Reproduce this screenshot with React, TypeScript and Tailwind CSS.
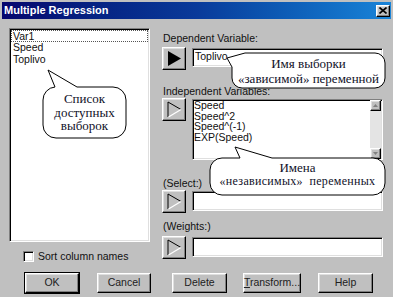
const sunken =
  "bg-white border border-t-[#808080] border-l-[#808080] border-r-white border-b-white shadow-[inset_1px_1px_0_#000,inset_-1px_-1px_0_#dfdfdf]";
const raised =
  "bg-[#c0c0c0] border border-t-white border-l-white border-r-black border-b-black shadow-[inset_-1px_-1px_0_#808080,inset_1px_1px_0_#dfdfdf]";

function ArrowButton({ filled }: { filled?: boolean }) {
  return (
    <div className={`${raised} w-[24px] h-[23px] shrink-0 flex items-center justify-center`}>
      <svg width="20" height="19" viewBox="0 0 20 19">
        {filled ? (
          <polygon points="4,2 17,9.5 4,17" fill="#000" />
        ) : (
          <>
            <polygon points="4,2 17,9.5 4,17" fill="#c0c0c0" />
            <polyline points="4,17 4,2 17,9.5" fill="none" stroke="#000" strokeWidth="1" />
            <line x1="17" y1="9.5" x2="4.5" y2="17" stroke="#fff" strokeWidth="1.2" />
          </>
        )}
      </svg>
    </div>
  );
}

function Btn({ label, className }: { label: React.ReactNode; className: string }) {
  return (
    <div className={`${raised} h-[20px] flex items-center justify-center text-[10.5px] text-[#202020] ${className}`}>
      {label}
    </div>
  );
}

export default function App() {
  return (
    <div className="relative w-[393px] h-[297px] bg-[#c0c0c0] pt-[2px] px-[2px] overflow-hidden font-['Liberation_Sans',Arial,sans-serif] text-[10.5px] text-[#101010]">
      {/* title bar */}
      <div className="h-[17px] flex items-center justify-between pl-[2px] pr-[1px] bg-gradient-to-r from-[#06066e] via-[#0a3a9a] to-[#1a84d8]">
        <span className="text-white font-bold text-[11px] leading-[13px]">Multiple Regression</span>
        <div className={`${raised} w-[14px] h-[12px] flex items-center justify-center`}>
          <svg width="8" height="7" viewBox="0 0 8 7">
            <path d="M0.5 0.5 L7.5 6.5 M7.5 0.5 L0.5 6.5" stroke="#000" strokeWidth="1.6" />
          </svg>
        </div>
      </div>

      <div className="flex mt-[9px]">
        {/* left column */}
        <div className="ml-[7px] w-[141px] flex flex-col">
          <div className={`${sunken} h-[214px] px-[1px] pt-[1px]`}>
            <div className="border border-dotted border-[#555] leading-[10px] pl-[1px]">Var1</div>
            <div className="leading-[11.5px] pl-[2px]">Speed</div>
            <div className="leading-[11.5px] pl-[2px]">Toplivo</div>
          </div>
          <div className="flex items-center mt-[9px] ml-[14px] h-[11px]">
            <div className={`${sunken} w-[11px] h-[11px]`} />
            <span className="ml-[4px] leading-[11px]">Sort column names</span>
          </div>
        </div>

        {/* right column */}
        <div className="ml-[12px] w-[221px] flex flex-col">
          <div className="mt-[4px] h-[13px] leading-[13px] pl-[1px]">Dependent Variable:</div>
          <div className="flex mt-[2px]">
            <ArrowButton filled />
            <div className={`${sunken} ml-[6px] mt-[1px] w-[191px] h-[19px] pl-[2px] leading-[14px]`}>Toplivo</div>
          </div>

          <div className="mt-[15px] h-[13px] leading-[13px] pl-[1px]">Independent Variables:</div>
          <div className="flex">
            <ArrowButton />
            <div className={`${sunken} ml-[6px] mt-[1px] w-[191px] h-[61px] flex`}>
              <div className="flex-1 pl-[1px] text-[10.5px] leading-[10.5px]">
                <div>Speed</div>
                <div>Speed^2</div>
                <div>Speed^(-1)</div>
                <div>EXP(Speed)</div>
              </div>
              <div className="w-[11px] mr-[1px] bg-[#e4e4e4] flex flex-col justify-between">
                <div className={`${raised} h-[11px] flex items-center justify-center`}>
                  <svg width="5" height="3" viewBox="0 0 5 3"><polygon points="2.5,0 5,3 0,3" fill="#808080" /></svg>
                </div>
                <div className={`${raised} h-[11px] flex items-center justify-center`}>
                  <svg width="5" height="3" viewBox="0 0 5 3"><polygon points="0,0 5,0 2.5,3" fill="#808080" /></svg>
                </div>
              </div>
            </div>
          </div>

          <div className="mt-[17px] h-[13px] leading-[13px] pl-[1px]">(Select:)</div>
          <div className="flex">
            <ArrowButton />
            <div className={`${sunken} ml-[6px] mt-[1px] w-[191px] h-[20px]`} />
          </div>

          <div className="mt-[7px] h-[13px] leading-[13px] pl-[1px]">(Weights:)</div>
          <div className="flex mt-[3px]">
            <ArrowButton />
            <div className={`${sunken} ml-[6px] mt-[1px] w-[191px] h-[20px]`} />
          </div>
        </div>
      </div>

      {/* bottom buttons */}
      <div className="flex mt-[11px]">
        <Btn label="OK" className="ml-[23px] w-[54px] outline outline-1 outline-black" />
        <Btn label="Cancel" className="ml-[18px] w-[54px]" />
        <Btn label="Delete" className="ml-[21px] w-[55px]" />
        <Btn label={<span><u>T</u>ransform...</span>} className="ml-[16px] w-[58px]" />
        <Btn label="Help" className="ml-[17px] w-[55px]" />
      </div>

      {/* callouts */}
      <div className="absolute left-[40px] top-[68px] w-[90px] h-[72px] font-['Liberation_Serif','Times_New_Roman',serif] text-[#101028]">
        <svg className="absolute inset-0" width="90" height="72" viewBox="0 0 90 72">
          <path
            d="M 15 19 L 8 2 L 37 19 H 73 A 13 13 0 0 1 86 32 V 57 A 13 13 0 0 1 73 70 H 16 A 13 13 0 0 1 3 57 V 32 A 13 13 0 0 1 15 19 Z"
            fill="#fff"
            stroke="#000"
            strokeWidth="1"
          />
        </svg>
        <div className="absolute left-[3px] top-[24px] w-[83px] text-center text-[13px] leading-[13.5px]">
          Список
          <br />
          доступных
          <br />
          выборок
        </div>
      </div>

      <div className="absolute left-[224px] top-[50px] w-[164px] h-[41px] font-['Liberation_Serif','Times_New_Roman',serif] text-[#101028]">
        <svg className="absolute inset-0" width="164" height="41" viewBox="0 0 164 41">
          <path
            d="M 21 3 H 151 A 10 10 0 0 1 161 13 V 28 A 10 10 0 0 1 151 38 H 18 A 10 10 0 0 1 8 28 V 17 L 3 8 Z"
            fill="#fff"
            stroke="#000"
            strokeWidth="1"
          />
        </svg>
        <div className="absolute left-[8px] top-[6px] w-[153px] text-center text-[13px] leading-[15px]">
          Имя выборки
          <br />
          «зависимой» переменной
        </div>
      </div>

      <div className="absolute left-[207px] top-[144px] w-[181px] h-[54px] font-['Liberation_Serif','Times_New_Roman',serif] text-[#101028]">
        <svg className="absolute inset-0" width="181" height="54" viewBox="0 0 181 54">
          <path
            d="M 15 14 H 33 L 28 3 L 65 14 H 166 A 12 12 0 0 1 178 26 V 39 A 12 12 0 0 1 166 51 H 15 A 12 12 0 0 1 3 39 V 26 A 12 12 0 0 1 15 14 Z"
            fill="#fff"
            stroke="#000"
            strokeWidth="1"
          />
        </svg>
        <div className="absolute left-[3px] top-[18px] w-[175px] text-center text-[13px] leading-[12px]">
          Имена
        </div>
        <div className="absolute left-[3px] top-[31px] w-[175px] text-center text-[12px] leading-[12px] tracking-[0.3px]">
          «независимых»&nbsp;&nbsp;переменных
        </div>
      </div>
    </div>
  );
}
